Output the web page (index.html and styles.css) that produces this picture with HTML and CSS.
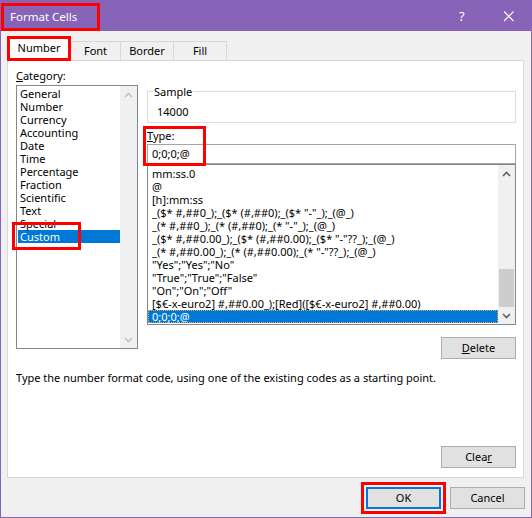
FILE: index.html
```html
<!DOCTYPE html>
<html>
<head>
<meta charset="utf-8">
<link rel="stylesheet" href="styles.css">
</head>
<body>
<div class="dialog">
  <div class="titlebar">
    <span class="title">Format Cells</span>
    <span class="help">?</span>
    <span class="close"><svg width="12" height="12" viewBox="0 0 12 12"><path d="M1 1.5 L10.5 11 M10.5 1.5 L1 11" stroke="#fff" stroke-width="1.1" fill="none"/></svg></span>
  </div>
  <div class="tabs">
    <div class="tab active">Number</div>
    <div class="tab first">Font</div>
    <div class="tab">Border</div>
    <div class="tab">Fill</div>
  </div>
  <div class="panel">
    <div class="main">
      <div class="cat-col">
        <div class="label"><u>C</u>ategory:</div>
        <div class="listbox cat">
          <div class="items">
            <div class="item">General</div>
            <div class="item">Number</div>
            <div class="item">Currency</div>
            <div class="item">Accounting</div>
            <div class="item">Date</div>
            <div class="item">Time</div>
            <div class="item">Percentage</div>
            <div class="item">Fraction</div>
            <div class="item">Scientific</div>
            <div class="item">Text</div>
            <div class="item">Special</div>
            <div class="item sel">Custom</div>
          </div>
          <div class="scrollbar disabled">
            <div class="sb-btn"><svg width="9" height="6" viewBox="0 0 9 6"><path d="M1 5 L4.5 1.5 L8 5" stroke="#c2c2c2" stroke-width="1.6" fill="none"/></svg></div>
            <div class="track"></div>
            <div class="sb-btn"><svg width="9" height="6" viewBox="0 0 9 6"><path d="M1 1 L4.5 4.5 L8 1" stroke="#c2c2c2" stroke-width="1.6" fill="none"/></svg></div>
          </div>
          <span class="mark mark-custom"></span>
        </div>
      </div>
      <div class="right-col">
        <fieldset class="sample">
          <legend>Sample</legend>
          <div class="sample-val">14000</div>
        </fieldset>
        <div class="label type-label"><u>T</u>ype:</div>
        <div class="type-input">0;0;0;@</div>
        <div class="listbox fmt">
          <div class="items">
            <div class="item">mm:ss.0</div>
            <div class="item">@</div>
            <div class="item">[h]:mm:ss</div>
            <div class="item">_($* #,##0_);_($* (#,##0);_($* "-"_);_(@_)</div>
            <div class="item">_(* #,##0_);_(* (#,##0);_(* "-"_);_(@_)</div>
            <div class="item">_($* #,##0.00_);_($* (#,##0.00);_($* "-"??_);_(@_)</div>
            <div class="item">_(* #,##0.00_);_(* (#,##0.00);_(* "-"??_);_(@_)</div>
            <div class="item">"Yes";"Yes";"No"</div>
            <div class="item">"True";"True";"False"</div>
            <div class="item">"On";"On";"Off"</div>
            <div class="item">[$€-x-euro2] #,##0.00_);[Red]([$€-x-euro2] #,##0.00)</div>
            <div class="item sel focus">0;0;0;@</div>
          </div>
          <div class="scrollbar">
            <div class="sb-btn"><svg width="9" height="6" viewBox="0 0 9 6"><path d="M1 5 L4.5 1.5 L8 5" stroke="#606060" stroke-width="1.6" fill="none"/></svg></div>
            <div class="track"><div class="thumb"></div></div>
            <div class="sb-btn"><svg width="9" height="6" viewBox="0 0 9 6"><path d="M1 1 L4.5 4.5 L8 1" stroke="#606060" stroke-width="1.6" fill="none"/></svg></div>
          </div>
        </div>
        <span class="mark mark-type"></span>
        <div class="btn-row"><button class="btn"><u>D</u>elete</button></div>
      </div>
    </div>
    <p class="desc">Type the number format code, using one of the existing codes as a starting point.</p>
    <div class="btn-row clear-row"><button class="btn">Clea<u>r</u></button></div>
  </div>
  <div class="footer">
    <button class="btn ok">OK</button>
    <button class="btn">Cancel</button>
  </div>
</div>
</body>
</html>
```
FILE: styles.css
```css
* { box-sizing: border-box; }
html, body { margin: 0; padding: 0; }
body {
  font-family: "Noto Sans", "DejaVu Sans", sans-serif;
  font-size: 11px;
  line-height: 13px;
  color: #000;
  background: #fff;
}
.dialog {
  width: 532px;
  height: 518px;
  border: 1px solid #8764b8;
  background: #f0f0f0;
  display: flex;
  flex-direction: column;
}
.titlebar {
  height: 30px;
  flex: none;
  background: #8764b8;
  color: #fff;
  display: flex;
  align-items: flex-start;
}
.title {
  margin-top: 2px;
  width: 99px;
  height: 28px;
  border: 3px solid #ff0000;
  padding-left: 6px;
  line-height: 21px;
  font-size: 11.5px;
}
.help {
  margin-left: auto;
  margin-top: 8px;
  font-size: 13px;
  line-height: 14px;
  width: 10px;
}
.close {
  margin-left: 34px;
  margin-right: 16px;
  margin-top: 9px;
  height: 12px;
  display: flex;
}
.tabs {
  height: 29px;
  flex: none;
  display: flex;
  align-items: flex-end;
  padding-left: 6px;
}
.tab {
  height: 19px;
  border-top: 1px solid #d9d9d9;
  border-right: 1px solid #d9d9d9;
  background: #f0f0f0;
  text-align: center;
  line-height: 18px;
  width: 53px;
}
.tab.first { width: 50px; }
.tab.active {
  width: 64px;
  height: 25px;
  margin-bottom: -1px;
  border: 3px solid #ff0000;
  background: #fff;
  line-height: 17px;
  position: relative;
  z-index: 1;
}
.panel {
  height: 418px;
  flex: none;
  margin: 0 7px 0 6px;
  background: #fff;
  border: 1px solid #d9d9d9;
  padding: 8px 7px 9px 8px;
  display: flex;
  flex-direction: column;
}
.main {
  display: grid;
  grid-template-columns: 122px 369px;
  column-gap: 9px;
  align-items: start;
}
.label { height: 13px; }
.listbox {
  position: relative;
  border: 1px solid #828790;
  background: #fff;
  display: flex;
}
.listbox .items { flex: 1; padding-top: 1px; min-width: 0; overflow: hidden; }
.item { height: 13px; white-space: nowrap; }
.cat { margin-top: 3px; height: 264px; }
.cat .item { padding-left: 2px; margin-left: 1px; }
.item.sel { background: #0078d7; color: #fff; }
.fmt .items { padding-top: 2px; }
.fmt .item { padding-left: 4px; }
.item.focus { outline: 1px dotted #e8a25a; outline-offset: -1px; }
.scrollbar {
  width: 17px;
  flex: none;
  background: #f0f0f0;
  display: flex;
  flex-direction: column;
}
.sb-btn {
  height: 17px;
  display: flex;
  align-items: center;
  justify-content: center;
}
.track {
  flex: 1;
  display: flex;
  flex-direction: column;
  justify-content: flex-end;
}
.thumb {
  height: 38px;
  margin: 0 1px;
  background: #cdcdcd;
}
.mark {
  position: absolute;
  border: 3px solid #ff0000;
  pointer-events: none;
}
.mark-custom { left: -5px; top: 136px; width: 69px; height: 28px; }
.right-col {
  position: relative;
  padding-top: 16px;
  display: flex;
  flex-direction: column;
}
.sample {
  margin: 0;
  border: 1px solid #dcdcdc;
  padding: 0 0 4px 5px;
  min-width: 0;
}
.sample legend {
  padding: 0 1px;
  line-height: 13px;
}
.sample-val { margin-top: 7px; padding-left: 4px; }
.type-label { margin-top: 6px; }
.type-input {
  margin-top: 2px;
  height: 20px;
  border: 1px solid #a5a5a5;
  padding-left: 4px;
  line-height: 17px;
}
.fmt { height: 161px; }
.mark-type { left: -4px; top: 57px; width: 63px; height: 40px; }
.btn-row { display: flex; justify-content: flex-end; }
.right-col .btn-row { margin-top: 12px; }
.btn {
  font: inherit;
  color: #000;
  width: 75px;
  height: 22px;
  border: 1px solid #adadad;
  background: #e1e1e1;
  padding: 0;
  line-height: 18px;
  margin: 0;
}
.desc { margin: 12px 0 0 0; line-height: 14px; }
.clear-row { margin-top: auto; }
.footer {
  flex: 1;
  display: flex;
  justify-content: flex-end;
  align-items: flex-start;
  padding: 9px 6px 0 0;
  gap: 9px;
}
.btn.ok {
  border: 2px solid #0078d7;
  outline: 3px solid #ff0000;
  outline-offset: 2px;
}
```
